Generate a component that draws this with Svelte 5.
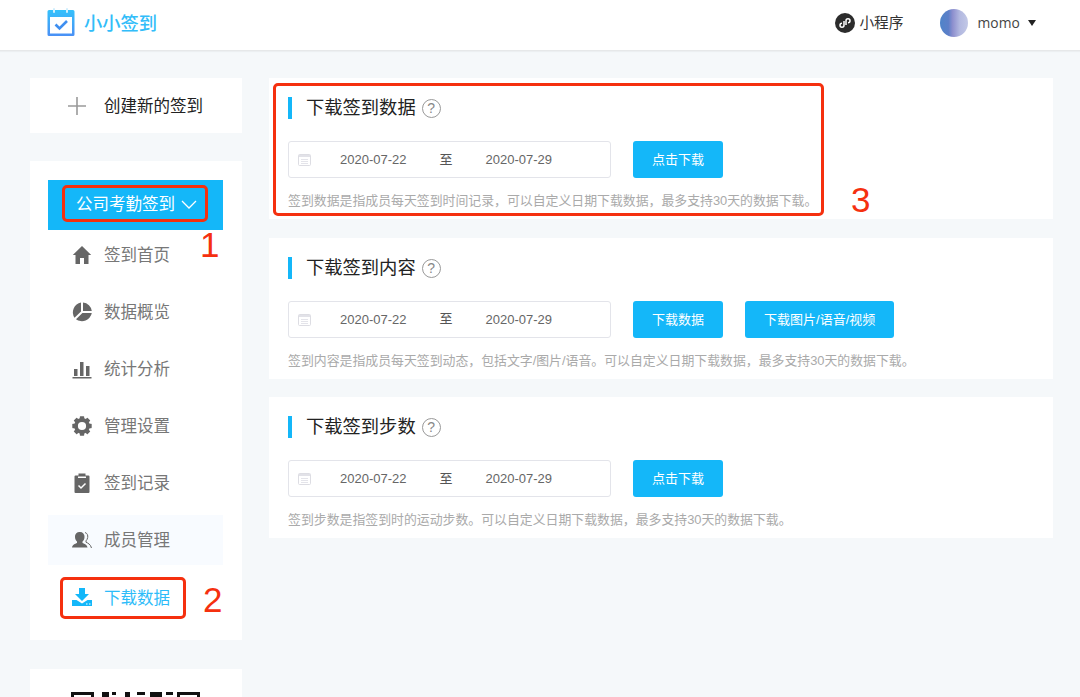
<script>
  const menu = [
    { label: '签到首页', icon: 'home' },
    { label: '数据概览', icon: 'pie' },
    { label: '统计分析', icon: 'bars' },
    { label: '管理设置', icon: 'gear' },
    { label: '签到记录', icon: 'clip' },
    { label: '成员管理', icon: 'user', hover: true },
    { label: '下载数据', icon: 'down', active: true }
  ];
  const sections = [
    { title: '下载签到数据', buttons: ['点击下载'], hint: '签到数据是指成员每天签到时间记录，可以自定义日期下载数据，最多支持30天的数据下载。' },
    { title: '下载签到内容', buttons: ['下载数据', '下载图片/语音/视频'], hint: '签到内容是指成员每天签到动态，包括文字/图片/语音。可以自定义日期下载数据，最多支持30天的数据下载。' },
    { title: '下载签到步数', buttons: ['点击下载'], hint: '签到步数是指签到时的运动步数。可以自定义日期下载数据，最多支持30天的数据下载。' }
  ];
  const teeth = [0, 45, 90, 135, 180, 225, 270, 315];
</script>

<div class="page">
  <header class="top">
    <div class="brand">
      <svg class="logo" width="30" height="30" viewBox="0 0 30 30" aria-hidden="true">
        <defs>
          <linearGradient id="lg" x1="0" y1="0" x2="0" y2="1">
            <stop offset="0" stop-color="#35c1fb" />
            <stop offset="1" stop-color="#4a90f5" />
          </linearGradient>
        </defs>
        <path d="M3 3h24a1.500 1.500 0 0 1 1.500 1.500v23a1.500 1.500 0 0 1-1.500 1.500H3a1.500 1.500 0 0 1-1.500-1.500v-23A1.500 1.500 0 0 1 3 3z" fill="url(#lg)" />
        <rect x="4" y="10" width="22" height="16.500" fill="#fff" />
        <rect x="7" y="1" width="2" height="5" rx="1" fill="#cfeefd" />
        <rect x="20" y="1" width="2" height="5" rx="1" fill="#cfeefd" />
        <path d="M9.500 17.500l4 4 7.500-7.500" fill="none" stroke="#3f8ff0" stroke-width="2.600" />
      </svg>
      <span class="brand-name">小小签到</span>
    </div>
    <div class="top-right">
      <div class="mini">
        <svg width="20" height="20" viewBox="0 0 20 20" aria-hidden="true">
          <circle cx="10" cy="10" r="10" fill="#2c2c2c" />
          <path d="M9 8v4.200a2 2 0 1 1-2-2M11 12V7.800a2 2 0 1 1 2 2" fill="none" stroke="#fff" stroke-width="1.500" />
        </svg>
        <span class="lift">小程序</span>
      </div>
      <div class="user">
        <span class="avatar"></span>
        <span class="uname">momo</span>
        <span class="caret"></span>
      </div>
    </div>
  </header>

  <div class="body">
    <aside class="side">
      <div class="card create">
        <svg width="20" height="20" viewBox="0 0 20 20" aria-hidden="true">
          <path d="M10 1v18M1 10h18" stroke="#9a9a9a" stroke-width="1.600" />
        </svg>
        <span class="lift">创建新的签到</span>
      </div>

      <nav class="card menu">
        <div class="company">
          <span class="lift2">公司考勤签到</span>
          <svg width="16" height="10" viewBox="0 0 16 10" aria-hidden="true">
            <path d="M1 1l7 7 7-7" fill="none" stroke="#fff" stroke-width="1.300" />
          </svg>
          <span class="mark mark-company"></span>
          <span class="num num-1">1</span>
        </div>
        {#each menu as item}
          <div class="item" class:hover={item.hover} class:active={item.active}>
            <span class="ico">
              {#if item.icon === 'home'}
                <svg width="20" height="20" viewBox="0 0 20 20"><path d="M10 1L0.800 10h2.700V19h4.500v-6h4v6h4.500v-9h2.700z" fill="#666" /></svg>
              {:else if item.icon === 'pie'}
                <svg width="20" height="20" viewBox="0 0 20 20"><path d="M9 .5v9l-6.500 6.300A10 10 0 0 1 9 .5zM11 .5A9.500 9.500 0 0 1 19.800 9H11zM19.800 11A10 10 0 0 1 4 17.200L10.400 11z" fill="#666" /></svg>
              {:else if item.icon === 'bars'}
                <svg width="20" height="20" viewBox="0 0 20 20"><path d="M2 10h3.500v7H2zM8 3h3.500v14H8zM14 7h3.500v10H14zM0.500 18h19v1.500H.5z" fill="#666" /></svg>
              {:else if item.icon === 'gear'}
                <svg width="20" height="20" viewBox="0 0 20 20">
                  <circle cx="10" cy="10" r="6" fill="none" stroke="#666" stroke-width="3.800" />
                  {#each teeth as a}
                    <rect x="7.800" y="0.300" width="4.400" height="4" rx=".6" fill="#666" transform="rotate({a} 10 10)" />
                  {/each}
                </svg>
              {:else if item.icon === 'clip'}
                <svg width="20" height="20" viewBox="0 0 20 20"><path d="M3.500 2.500h3V.5h7v2h3a1 1 0 0 1 1 1V19a1 1 0 0 1-1 1h-13a1 1 0 0 1-1-1V3.500a1 1 0 0 1 1-1z" fill="#666" /><path d="M6 3.500h8v1.500H6z" fill="#fff" /><path d="M6.500 12.500l2.500 2.500 4.500-4.500" fill="none" stroke="#fff" stroke-width="1.500" /></svg>
              {:else if item.icon === 'user'}
                <svg width="20" height="20" viewBox="0 0 20 20"><path d="M8 2a4.500 4.500 0 0 1 4.500 5c0 2-1 3.500-2 4.500v1.500c2 1 4.500 1.500 5 4.500H0c.5-3 3-3.500 5-4.500v-1.500c-1-1-2-2.500-2-4.500A4.500 4.500 0 0 1 8 2z" fill="#666" /><path d="M13 2.500c2.500.8 3 3 2.700 5-.2 1.600-1 2.600-1.700 3.300v1.400c2 1 4.500 2 5.500 5.800" fill="none" stroke="#666" stroke-width="1" /></svg>
              {:else}
                <svg width="20" height="20" viewBox="0 0 20 20"><path d="M7 1h6v6h4l-7 7-7-7h4z" fill="#14b7f9" /><path d="M0 13h4.500l5.500 3.500 5.500-3.500H20v6H0z" fill="#14b7f9" /><path d="M14 16.500h1.500v1H14zM17 16.500h1.500v1H17z" fill="#fff" /></svg>
              {/if}
            </span>
            <span class:lift={!item.active}>{item.label}</span>
            {#if item.active}
              <span class="mark mark-down"></span>
              <span class="num num-2">2</span>
            {/if}
          </div>
        {/each}
      </nav>

      <div class="card qr">
        <svg width="130" height="5" viewBox="0 0 130 5" aria-hidden="true">
          <path d="M1 0h23v5H1zM1 3h23" fill="#111" />
          <path d="M32 0h7v5h-7zM42 0h4v3h-4zM55 0h5v5h-5zM67 0h8v3h-8zM80 0h12v5H80zM96 0h7v3h-7zM107 0h23v5h-23z" fill="#111" />
          <path d="M4 3h17v2H4zM110 3h17v2h-17z" fill="#fff" />
        </svg>
      </div>
    </aside>

    <main class="main">
      {#each sections as s, i}
        <section class="card sec">
          <h2><span class="tick"></span><span class="title">{s.title}</span><span class="help">?</span></h2>
          <div class="row">
            <div class="range">
              <svg width="13" height="13" viewBox="0 0 13 13" aria-hidden="true">
                <rect x=".5" y="1.500" width="12" height="11" rx="1" fill="#fff" stroke="#dddde3" />
                <rect x="1" y="2" width="11" height="2" fill="#e2e2e8" />
                <path d="M3 6.500h7M3 8.500h7M3 10.500h7" stroke="#e4e4ea" />
              </svg>
              <span class="d1">2020-07-22</span>
              <span class="to">至</span>
              <span class="d2">2020-07-29</span>
            </div>
            {#each s.buttons as b}
              <button type="button" class="btn">{b}</button>
            {/each}
          </div>
          <p class="hint">{s.hint}</p>
          {#if i === 0}
            <span class="mark mark-sec"></span>
            <span class="num num-3">3</span>
          {/if}
        </section>
      {/each}
    </main>
  </div>
</div>

<style>
  :global(body) {
    margin: 0;
    background: #f5f8fa;
    font-family: "Liberation Sans", "Noto Sans CJK SC", sans-serif;
  }
  .page { height: 697px; overflow: hidden; }
  .top {
    height: 51px;
    box-sizing: border-box;
    background: #fff;
    border-bottom: 1px solid #e6e8e9;
    box-shadow: 0 1px 1px #eceff1;
    display: flex;
    justify-content: space-between;
    align-items: center;
    padding: 0 44px 6px 46px;
  }
  .brand { display: flex; align-items: center; gap: 8px; margin-top: 0; }
  .logo { display: block; }
  .brand-name { color: #32bdf9; font-size: 18.300px; font-weight: 500; padding-bottom: 1px; }
  .top-right { display: flex; align-items: center; gap: 37px; padding-top: 1px; }
  .mini { display: flex; align-items: center; gap: 4px; font-size: 14.700px; color: #333; }
  .mini svg { display: block; }
  .user { display: flex; align-items: center; }
  .avatar {
    width: 28px;
    height: 28px;
    border-radius: 50%;
    background: linear-gradient(90deg, #4f84c9 0%, #5d7fc8 30%, #8d8fce 45%, #b2b8e0 70%, #c2c8e6 100%);
  }
  .uname { font-family: "Open Sans", sans-serif; font-size: 13.800px; color: #444; margin-left: 9px; letter-spacing: .1px; padding-bottom: 1px; }
  .caret {
    width: 0;
    height: 0;
    margin-left: 8px;
    border-left: 4.500px solid transparent;
    border-right: 4.500px solid transparent;
    border-top: 6px solid #222;
  }

  .body { display: flex; gap: 27px; padding: 27px 27px 0 30px; align-items: flex-start; }
  .card { background: #fff; }
  .side { width: 212px; flex: none; display: flex; flex-direction: column; }
  .lift { padding-bottom: 2px; }
  .lift2 { padding-bottom: 4px; }
  .create {
    height: 55px;
    display: flex;
    align-items: center;
    gap: 17px;
    padding-left: 37px;
    font-size: 16.500px;
    color: #222;
  }
  .create svg { display: block; }
  .menu { margin-top: 28px; padding: 19px 19px 19px 18px; height: 441px; box-sizing: content-box; }
  .company {
    position: relative;
    height: 50px;
    background: #14b7f9;
    color: #fff;
    font-size: 16.500px;
    display: flex;
    align-items: center;
    gap: 6px;
    padding-left: 28px;
    box-sizing: border-box;
  }
  .company svg { display: block; margin-bottom: 1px; }
  .item {
    position: relative;
    height: 50px;
    margin-top: 7px;
    display: flex;
    align-items: center;
    font-size: 16.500px;
    color: #777;
    padding-left: 24px;
  }
  .company + .item { margin-top: 0; }
  .ico { width: 20px; height: 20px; margin-right: 12px; flex: none; padding-bottom: 1px; }
  .ico svg { display: block; }
  .item.hover { background: #f8fbff; }
  .item.active { color: #2dbcf9; }
  .qr { margin-top: 29px; height: 60px; padding: 23px 0 0 40px; box-sizing: border-box; }
  .qr svg { display: block; }

  .main { flex: 1; display: flex; flex-direction: column; gap: 19px; }
  .sec { position: relative; height: 141px; box-sizing: border-box; padding: 19px 0 0 19px; }
  .sec + .sec { margin-top: -.5px; }
  h2 {
    margin: 0;
    display: flex;
    align-items: center;
    height: 22px;
    font-size: 18.300px;
    font-weight: 400;
    color: #222;
  }
  .tick { width: 4px; height: 22px; background: #14b7f9; margin-right: 14px; }
  .title { padding-bottom: 4px; }
  .help {
    width: 19px;
    height: 19px;
    margin-left: 6px;
    margin-top: 1px;
    box-sizing: border-box;
    border: 1px solid #999;
    border-radius: 50%;
    color: #888;
    font-size: 14px;
    line-height: 17px;
    text-align: center;
  }
  .row { display: flex; margin-top: 22px; gap: 22px; }
  .range {
    width: 323px;
    height: 37px;
    box-sizing: border-box;
    border: 1px solid #e3e4ea;
    border-radius: 3px;
    display: flex;
    align-items: center;
    padding-left: 9px;
    font-size: 13px;
    color: #666;
  }
  .range svg { display: block; flex: none; }
  .d1 { margin-left: 29px; }
  .to { margin-left: 33px; color: #555; font-size: 13px; padding-bottom: 3px; }
  .d2 { margin-left: 33px; }
  .btn {
    height: 37px;
    padding: 0 19px 2px;
    border: 0;
    border-radius: 3px;
    background: #14b7f9;
    color: #fff;
    font: inherit;
    font-size: 13px;
    cursor: pointer;
  }
  .hint { margin: 14px 0 0; font-size: 12.880px; line-height: 18px; color: #aaa; white-space: nowrap; }

  .mark { position: absolute; box-sizing: border-box; border: 3px solid #f5300f; border-radius: 5px; pointer-events: none; }
  .mark-company { left: 14px; top: 5px; width: 146px; height: 37px; }
  .mark-down { left: 12px; top: 5px; width: 126px; height: 42px; }
  .mark-sec { left: 4px; top: 5px; width: 551px; height: 133px; }
  .num { position: absolute; color: #f5300f; font-family: "Liberation Sans", sans-serif; font-size: 35px; line-height: 35px; }
  .num-1 { left: 152px; top: 47px; }
  .num-2 { left: 155px; top: 10px; }
  .num-3 { left: 582px; top: 104px; }
</style>
